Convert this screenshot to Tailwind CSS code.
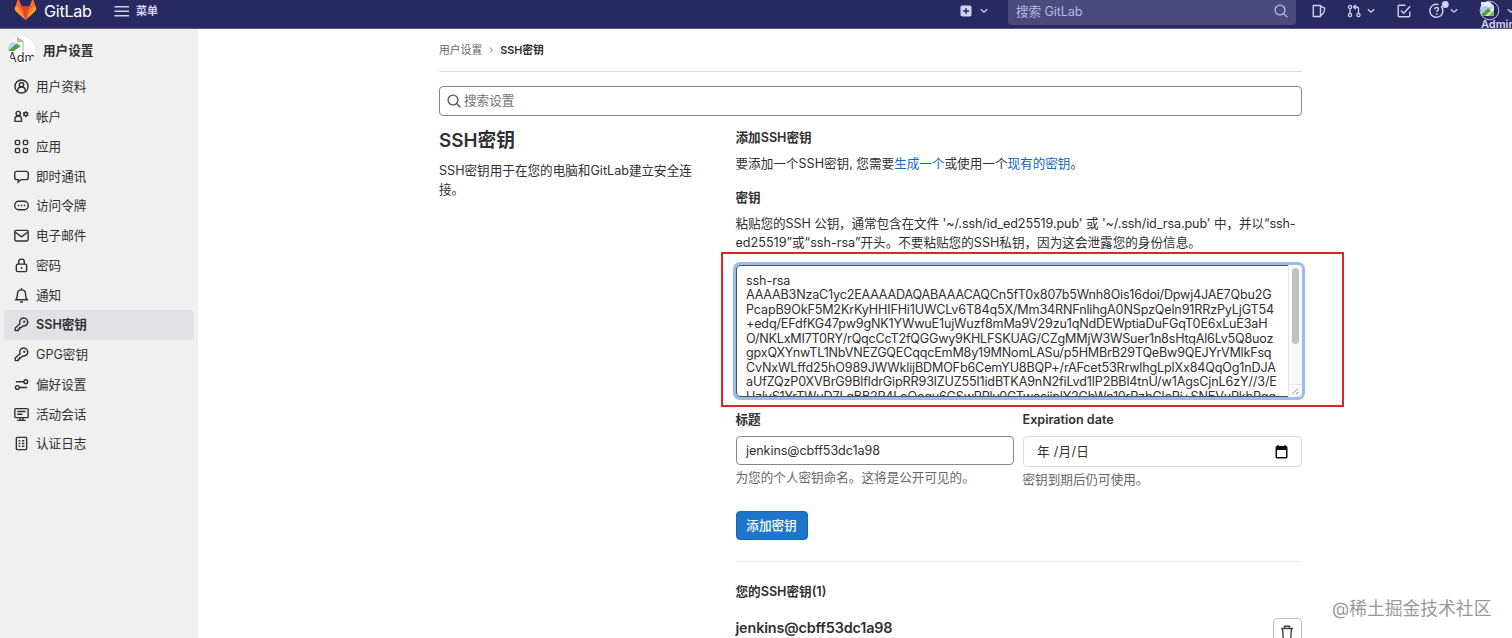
<!DOCTYPE html>
<html lang="zh-CN">
<head>
<meta charset="utf-8">
<title>SSH密钥 · 用户设置 · GitLab</title>
<script src="https://cdn.jsdelivr.net/npm/@tailwindcss/browser@4"></script>
</head>
<body class="relative h-[638px] w-[1512px] overflow-hidden bg-white font-['Inter','Noto_Sans_CJK_SC',sans-serif] text-[12.6px] leading-[19px] text-[#303030]">

<header class="flex h-[29px] items-start overflow-hidden border-b border-[#5c5a87] bg-[#292961] text-[#d1d1f0]">
  <svg class="ml-[14px] h-[22px] w-[23px] shrink-0" viewBox="0 0 23 22">
    <path d="M4.2-2 1 7.500Q.5 10 2.500 11.700L11.500 20 20.500 11.700Q22.500 10 22 7.500L18.800-2 15.400 6.500H7.600Z" fill="#fc6d26"/>
    <path d="M11.500 20 7.600 6.500h7.800Z" fill="#e24329"/>
    <path d="M1.200 7 .7 8.700Q.7 10.300 2.500 11.700L11.500 20 3.500 7ZM21.800 7l.5 1.700q0 1.600-1.800 3L11.500 20 19.500 7Z" fill="#fca326"/>
  </svg>
  <span class="ml-[7px] w-[70px] text-[16.2px] leading-[23px] tracking-[-0.3px] text-white">GitLab</span>
  <svg class="mt-[5px] h-[13px] w-[16px] shrink-0" viewBox="0 0 16 13" fill="none" stroke="currentColor" stroke-width="1.500"><path d="M.5 1.800h14.500M.5 6.300h14.500M.5 10.800h14.500"/></svg>
  <span class="ml-[6px] text-[11px] font-bold leading-[22px]">菜单</span>
  <div class="ml-auto mr-px flex">
    <svg class="mt-[5px] h-[12px] w-[12px]" viewBox="0 0 12 12"><rect x=".5" y=".5" width="11" height="11" rx="1.800" fill="currentColor"/><path d="M6 3v6M3 6h6" stroke="#292961" stroke-width="1.400"/></svg>
    <svg class="ml-[8px] mt-[8px] h-[6px] w-[8px]" viewBox="0 0 8 6" fill="none" stroke="currentColor" stroke-width="1.300"><path d="m.8 1.200 3.200 3 3.200-3"/></svg>
    <div class="ml-[20px] flex h-[25px] w-[288px] rounded-b-[4px] bg-[#4a4a7d] pl-[8px] text-[12.600px] leading-[23px] tracking-[-0.1px] text-[#b8b8e0]">
      <span>搜索 GitLab</span>
      <svg class="ml-auto mr-[8px] mt-[4px] h-[14px] w-[14px]" viewBox="0 0 14 14" fill="none" stroke="currentColor" stroke-width="1.300"><circle cx="6" cy="6" r="4.900"/><path d="m9.600 9.600 3.700 3.700"/></svg>
    </div>
    <svg class="ml-[16px] mt-[4px] h-[14px] w-[14px]" viewBox="0 0 14 14" fill="none" stroke="currentColor" stroke-width="1.400"><path d="M8.500 2.200V1.500H1.300v11h7.200v-.7M8.500 2.200v9.600l2.800-2.600q1.400-2 1.400-5L8.500 2.200Z"/></svg>
    <svg class="ml-[21px] mt-[4px] h-[14px] w-[15px]" viewBox="0 0 15 14" fill="none" stroke="currentColor" stroke-width="1.300"><circle cx="3" cy="3" r="1.600"/><circle cx="3" cy="11" r="1.600"/><circle cx="11.500" cy="11" r="1.600"/><path d="M3 4.600v4.800M7 3h2.500q2 0 2 2v4.400M8.800.8 6.600 3l2.200 2.200"/></svg>
    <svg class="ml-[5px] mt-[8px] h-[6px] w-[8px]" viewBox="0 0 8 6" fill="none" stroke="currentColor" stroke-width="1.300"><path d="m.8 1.200 3.200 3 3.200-3"/></svg>
    <svg class="ml-[22px] mt-[4px] h-[14px] w-[14px]" viewBox="0 0 14 14" fill="none" stroke="currentColor" stroke-width="1.400"><path d="M8.500 1.200H2.200q-1 0-1 1v9.600q0 1 1 1h9.600q1 0 1-1V7.500M4 6.500l2.700 2.700 6.500-7"/></svg>
    <svg class="ml-[18px] mt-0 h-[20px] w-[21px]" viewBox="0 0 21 20" fill="none" stroke="currentColor" stroke-width="1.400"><path d="M12 6.200A6.500 6.500 0 1 1 9.500 4.600"/><path d="M5.700 9.300q0-1.800 1.900-1.800t1.900 1.600q0 1-1 1.500-.9.500-.9 1.500"/><circle cx="7.600" cy="14" r=".3" fill="currentColor"/><circle cx="16.300" cy="4.500" r="3.400" fill="currentColor" stroke="none"/></svg>
    <svg class="ml-0 mt-[8px] h-[6px] w-[8px]" viewBox="0 0 8 6" fill="none" stroke="currentColor" stroke-width="1.300"><path d="m.8 1.200 3.200 3 3.200-3"/></svg>
    <div class="ml-[21px] w-[32px] shrink-0">
      <div class="flex h-[18px]">
        <svg class="h-[21px] w-[22px] shrink-0" viewBox="0 0 22 21"><path d="M2 2h9l4 4v10H2Z" fill="#e8effa"/><path d="M2 9q3-5 7-2l6-1-6 7-7 3Z" fill="#a9c9f2"/><path d="m2 15 7-7 3 3-6 5H2Z" fill="#4ea436"/><path d="m9 16 6-6v6Z" fill="#71c344"/><circle cx="10.500" cy="10.500" r="9.300" fill="none" stroke="#c4c4e6" stroke-width="1"/></svg>
        <svg class="ml-[6px] mt-[8px] h-[6px] w-[8px] shrink-0" viewBox="0 0 8 6" fill="none" stroke="currentColor" stroke-width="1.300"><path d="m.8 1.200 3.200 3 3.200-3"/></svg>
      </div>
      <span class="ml-[2px] block text-[11px] font-semibold leading-[12px]">Admin</span>
    </div>
  </div>
</header>

<div class="flex h-[609px]">
  <aside class="w-[198px] shrink-0 bg-[#f0f0f0]">
    <div class="flex h-[43px] items-center pl-[8px]">
      <div class="relative h-[27px] w-[27px] overflow-hidden rounded-full bg-white">
        <svg class="absolute left-0 top-0 h-[16px] w-[16px]" viewBox="0 0 16 16"><path d="M9.500.5v4H15L9.500.5Z" fill="#ccc" stroke="#999" stroke-width=".8"/><path d="M15 4.500V14" stroke="#aaa"/><path d="M0 8q4-5 8-2l4 1-6 6H0Z" fill="#b8d3f5"/><path d="m0 14 8-7 5 2-7 5Z" fill="#4ea436"/></svg>
        <span class="absolute left-0 top-[14px] text-[12.600px] leading-[14px]">Admin</span>
      </div>
      <span class="ml-[8px] text-[12.600px] font-bold">用户设置</span>
    </div>
    <nav class="ml-[4px] w-[190px] [&_a]:flex [&_a]:h-[29.750px] [&_a]:items-center [&_a]:gap-[7px] [&_a]:rounded-[4px] [&_a]:pl-[10px] [&_svg]:h-[15px] [&_svg]:w-[15px] [&_svg]:fill-none [&_svg]:stroke-current [&_svg]:stroke-[1.500]">
      <a><svg viewBox="0 0 16 16"><circle cx="8" cy="8" r="7"/><circle cx="8" cy="6" r="2.300"/><path d="M4 13.300V12q0-3.500 4-3.500t4 3.500v1.300"/></svg>用户资料</a>
      <a><svg viewBox="0 0 16 16"><circle cx="4.500" cy="4.800" r="2.300"/><path d="M1 11q0-3.500 3.500-3.500T8 11v2.200H1Z"/><circle cx="12.500" cy="5.500" r="1.700"/><path d="M12.500 2.300v1.500M12.500 7.200v1.500M9.700 3.900l1.300.8M14 6.300l1.300.8M9.700 7.100l1.300-.8M14 4.700l1.300-.8"/></svg>帐户</a>
      <a><svg viewBox="0 0 16 16"><rect x="1.500" y="1.500" width="4.500" height="4.500" rx="1.200"/><rect x="10" y="1.500" width="4.500" height="4.500" rx="1.200"/><rect x="1.500" y="10" width="4.500" height="4.500" rx="1.200"/><rect x="10" y="10" width="4.500" height="4.500" rx="1.200"/></svg>应用</a>
      <a><svg viewBox="0 0 16 16"><path d="M3 2.500h10q2.200 0 2.200 2v4.800q0 2-2.200 2H7.500L4.500 14v-2.700H3q-2.200 0-2.200-2V4.500q0-2 2.200-2Z"/></svg>即时通讯</a>
      <a><svg viewBox="0 0 16 16"><rect x=".8" y="3.500" width="14.400" height="9" rx="4.300"/><path d="M4 8h1.600M7.200 8h1.600M10.400 8H12"/></svg>访问令牌</a>
      <a><svg viewBox="0 0 16 16"><rect x=".9" y="2.500" width="14.200" height="11.300" rx="1.500"/><path d="m1.500 4.500 6.500 5 6.500-5"/></svg>电子邮件</a>
      <a><svg viewBox="0 0 16 16"><rect x="2.500" y="6.500" width="11" height="8" rx="1.500"/><path d="M5 6.500V4q0-2.800 3-2.800T11 4v2.500M8 9.500v2.200"/></svg>密码</a>
      <a><svg viewBox="0 0 16 16"><path d="M2 12.500q1.700-2 1.700-6Q3.700 2 8 2t4.300 4.500q0 4 1.700 6ZM6.500 15h3M8 0v2"/></svg>通知</a>
      <a class="bg-[#e1e1e6] font-semibold"><svg viewBox="0 0 16 16"><path d="M6.400 7.200Q5.500 4 7.500 2.200q2.400-2 4.900-.6 3 2 2.100 5-1.300 3.200-5 2.900L7.700 11.300H6v1.600H4.500v1.600H1.300v-2.800Z"/><circle cx="11" cy="5" r=".5"/></svg>SSH密钥</a>
      <a><svg viewBox="0 0 16 16"><path d="M6.400 7.200Q5.500 4 7.500 2.200q2.400-2 4.900-.6 3 2 2.100 5-1.300 3.200-5 2.900L7.700 11.300H6v1.600H4.500v1.600H1.300v-2.800Z"/><circle cx="11" cy="5" r=".5"/></svg>GPG密钥</a>
      <a><svg viewBox="0 0 16 16"><circle cx="12.600" cy="5" r="2"/><circle cx="3.600" cy="11.200" r="2"/><path d="M2 5h8.500M5.600 11.200H14"/></svg>偏好设置</a>
      <a><svg viewBox="0 0 16 16"><rect x=".9" y="1.700" width="14.200" height="9.600" rx="1"/><path d="M3.500 4.800h9M3.500 7.800h5.500M6.500 11.300v2.500M9.500 11.300v2.500M3.500 14.300h9"/></svg>活动会话</a>
      <a><svg viewBox="0 0 16 16"><rect x="2.500" y="1.500" width="11" height="13" rx="1"/><path d="M5 5h1.800M8.500 5H11M5 8h1.800M8.500 8H11M5 11h1.800M8.500 11H11"/></svg>认证日志</a>
    </nav>
  </aside>

  <main class="ml-[241px] w-[862.500px] shrink-0">
    <div class="flex h-[43px] items-center border-b border-[#dbdbdb] text-[10.800px]">
      <span class="text-[#666]">用户设置</span>
      <svg class="mx-[6.500px] h-[6px] w-[5px]" viewBox="0 0 5 6" fill="none" stroke="#777"><path d="m1 .5 2.500 2.500L1 5.500"/></svg>
      <span class="font-semibold">SSH密钥</span>
    </div>
    <div class="mt-[14px] flex h-[30px] items-center rounded-[4px] border border-[#868686] pb-px pl-[7px] text-[#737373]">
      <svg class="mr-[3px] h-[14px] w-[14px]" viewBox="0 0 14 14" fill="none" stroke="#555" stroke-width="1.400"><circle cx="6" cy="6" r="4.900"/><path d="m9.600 9.600 3.700 3.700"/></svg>搜索设置
    </div>

    <div class="flex">
      <section class="w-[296.500px] shrink-0 pt-[13px]">
        <h1 class="text-[18.800px] font-semibold leading-[24px]">SSH密钥</h1>
        <p class="mt-[8px] w-[262px]">SSH密钥用于在您的电脑和GitLab建立安全连<br>接。</p>
      </section>

      <section class="w-[566px] shrink-0 pt-[12px]">
        <h2 class="font-semibold">添加SSH密钥</h2>
        <p class="mt-[7px] whitespace-nowrap">要添加一个SSH密钥, 您需要<a class="text-[#1068bf]">生成一个</a>或使用一个<a class="text-[#1068bf]">现有的密钥</a>。</p>
        <h2 class="mt-[15px] font-semibold">密钥</h2>
        <p class="mt-[7px] whitespace-nowrap"><span class="tracking-[-0.100px]">粘贴您的SSH 公钥，通常包含在文件 '~/.ssh/id_ed25519.pub' 或 '~/.ssh/id_rsa.pub' 中，并以“ssh-</span><br>ed25519”或“ssh-rsa”开头。不要粘贴您的SSH私钥，因为这会泄露您的身份信息。</p>

        <div class="relative mt-[13px] flex h-[132px] rounded-[4px] border border-[#4a4f5a] shadow-[0_0_0_3px_#99bde8]">
          <div class="flex-1 overflow-hidden whitespace-nowrap pl-[9.500px] pt-[8px] leading-[14.450px]">
            <div class="tracking-[-0.100px]">ssh-rsa</div>
            <div class="tracking-[-0.200px]">AAAAB3NzaC1yc2EAAAADAQABAAACAQCn5fT0x807b5Wnh8Ois16doi/Dpwj4JAE7Qbu2G</div>
            <div class="tracking-[-0.160px]">PcapB9OkF5M2KrKyHHIFHi1UWCLv6T84q5X/Mm34RNFnlihgA0NSpzQeln91RRzPyLjGT54</div>
            <div class="tracking-[-0.170px]">+edq/EFdfKG47pw9gNK1YWwuE1ujWuzf8mMa9V29zu1qNdDEWptiaDuFGqT0E6xLuE3aH</div>
            <div class="tracking-[-0.210px]">O/NKLxMI7T0RY/rQqcCcT2fQGGwy9KHLFSKUAG/CZgMMjW3WSuer1n8sHtqAl6Lv5Q8uoz</div>
            <div class="tracking-[-0.200px]">gpxQXYnwTL1NbVNEZGQECqqcEmM8y19MNomLASu/p5HMBrB29TQeBw9QEJYrVMlkFsq</div>
            <div class="tracking-[-0.160px]">CvNxWLffd25hO989JWWklijBDMOFb6CemYU8BQP+/rAFcet53RrwlhgLplXx84QqOg1nDJA</div>
            <div class="tracking-[-0.140px]">aUfZQzP0XVBrG9BlfldrGipRR93lZUZ55l1idBTKA9nN2fiLvd1lP2BBl4tnU/w1AgsCjnL6zY//3/E</div>
            <div class="tracking-[-0.200px]">UzlvS1YrTWuD7LgBB2P4LoQogu6GSwPPlv0GTwosijplY2GhWn10rPzbGloPi+SNEVuRkbPgg</div>
          </div>
          <div class="-my-px -mr-px flex w-[14px] flex-col items-center justify-between rounded-r-[4px] border-l border-[#e6e6e6] bg-[#fafafa] pb-px pt-[3px]">
            <div class="h-[76px] w-[7px] rounded-full bg-[#c1c1c1]"></div>
            <svg class="h-[12px] w-[12px] border-t border-[#e6e6e6]" viewBox="0 0 12 12" stroke="#777" stroke-width=".9"><path d="m3 10 6-6M7 10l2.500-2.500"/></svg>
          </div>
          <div class="absolute -left-[16px] -top-[14px] h-[155px] w-[623px] border-2 border-[#d9262a]"></div>
        </div>

        <div class="mt-[13px] flex gap-[9px]">
          <div class="w-[278px]">
            <h2 class="font-semibold">标题</h2>
            <div class="mt-[7px] flex h-[29px] items-center rounded-[4px] border border-[#868686] pl-[9.500px] tracking-[-0.080px]">jenkins@cbff53dc1a98</div>
            <p class="mt-[3px] text-[#666]">为您的个人密钥命名。这将是公开可见的。</p>
          </div>
          <div class="w-[279px]">
            <h2 class="font-semibold">Expiration date</h2>
            <div class="mt-[7px] flex h-[31px] items-center rounded-[4px] border border-[#dbdbdb] pl-[13.500px] pr-[13px]">
              <span class="tracking-[0.300px]">年 /月/日</span>
              <svg class="ml-auto h-[14px] w-[13px]" viewBox="0 0 13 14"><path d="M2 1h9q1.500 0 1.500 1.500V12q0 1.500-1.500 1.500H2Q.5 13.500.5 12V2.500Q.5 1 2 1Zm0 4v7h9V5Z" fill="#111" fill-rule="evenodd"/><path d="M3 0v2M10 0v2" stroke="#111" stroke-width="1.400"/></svg>
            </div>
            <p class="mt-[3px] text-[#666]">密钥到期后仍可使用。</p>
          </div>
        </div>
        <button class="mt-[22px] block h-[29px] w-[72px] rounded-[4px] border border-[#1068bf] bg-[#1f75cb] font-medium text-white">添加密钥</button>
        <div class="mt-[21px] border-t border-[#eee] pt-[20px] font-semibold">您的SSH密钥(1)</div>
        <div class="mt-[17px] flex justify-between">
          <span class="text-[14.400px] font-semibold tracking-[-0.150px]">jenkins@cbff53dc1a98</span>
          <div class="flex h-[29px] w-[29px] justify-center rounded-[4px] border border-[#bfbfbf] pt-[6px]"><svg class="h-[15px] w-[14px]" viewBox="0 0 14 15" fill="none" stroke="#444" stroke-width="1.400"><path d="M1 3.500h12M4.500 3.200V1.200h5v2M2.500 3.500l.8 10.500h7.400l.8-10.500"/></svg></div>
        </div>
      </section>
    </div>
  </main>
</div>
<div class="absolute left-[1332px] top-[597px] whitespace-nowrap text-[17.800px] leading-[24px] text-[#999]">@稀土掘金技术社区</div>
</body>
</html>
